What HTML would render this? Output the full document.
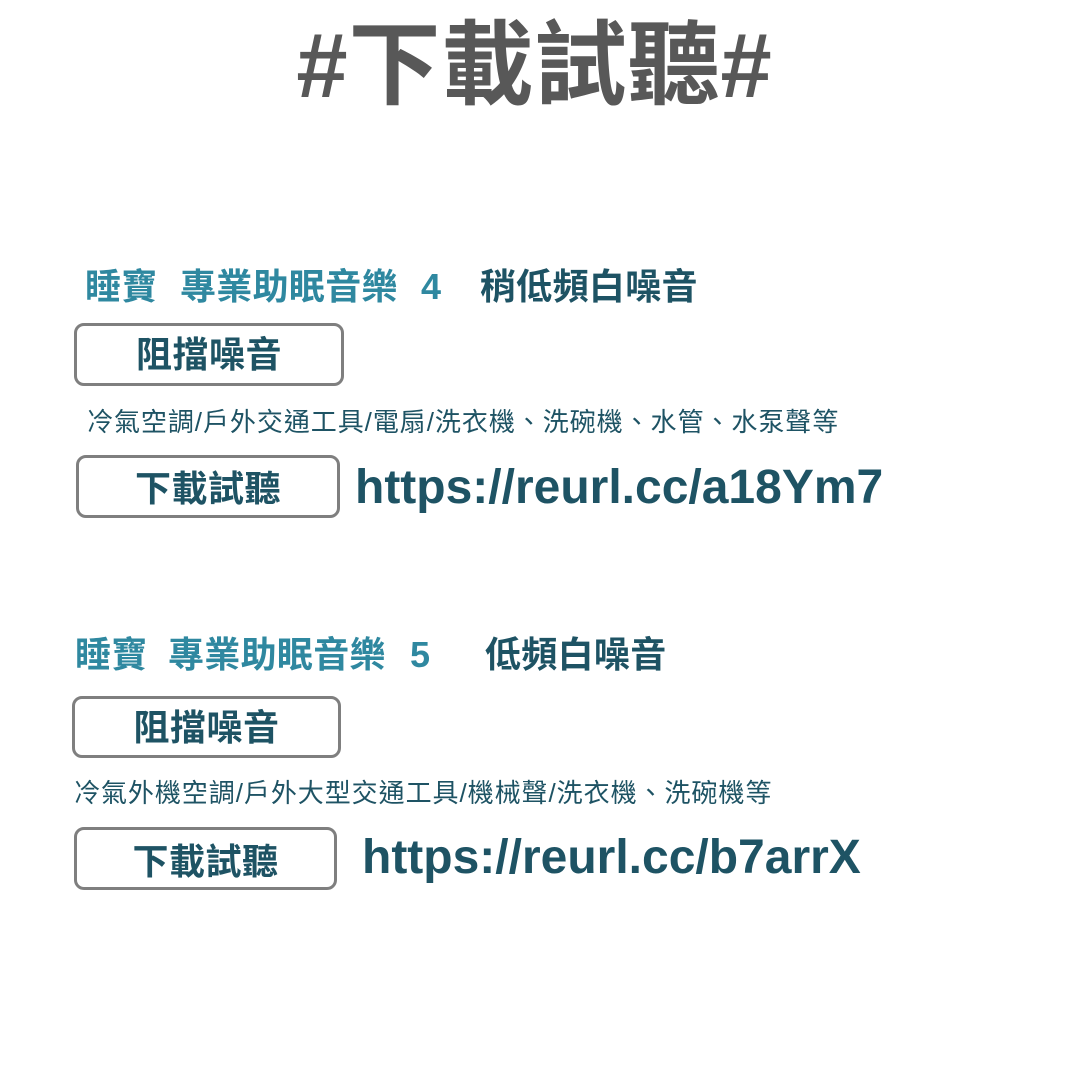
<!DOCTYPE html>
<html><head><meta charset="utf-8"><style>
body{margin:0;width:1069px;height:1069px;background:#fff;position:relative;overflow:hidden;font-family:"Liberation Sans","Noto Sans CJK TC",sans-serif;font-weight:bold}
.a{position:absolute;white-space:nowrap}
.t{left:0;width:1069px;text-align:center;top:16px;font-size:92px;color:#585858;line-height:100px;letter-spacing:1px}
.h{font-size:36px;line-height:40px;color:#2f88a0;letter-spacing:0.3px}
.d{color:#1e5364}
.box{position:absolute;border:3px solid #7f7f7f;border-radius:10px;box-sizing:border-box;text-align:center;color:#1e5364;font-size:36px;letter-spacing:0.5px}
.s{font-size:26px;font-weight:normal;color:#1e5364;line-height:28px;letter-spacing:0.95px}
.u{font-size:48px;color:#1e5364;line-height:50px}
</style></head><body>
<div class="a t">#下載試聽#</div>

<div class="a h" style="left:85px;top:267px">睡寶</div>
<div class="a h" style="left:180px;top:267px">專業助眠音樂</div>
<div class="a h" style="left:421px;top:267px">4</div>
<div class="a h d" style="left:480px;top:267px">稍低頻白噪音</div>
<div class="box" style="left:74px;top:323px;width:270px;height:63px;line-height:57px">阻擋噪音</div>
<div class="a s" style="left:87px;top:408px">冷氣空調/戶外交通工具/電扇/洗衣機、洗碗機、水管、水泵聲等</div>
<div class="box" style="left:76px;top:455px;width:264px;height:63px;line-height:61px">下載試聽</div>
<div class="a u" style="left:355px;top:463px">https://reurl.cc/a18Ym7</div>

<div class="a h" style="left:75px;top:635px">睡寶</div>
<div class="a h" style="left:168px;top:635px">專業助眠音樂</div>
<div class="a h" style="left:410px;top:635px">5</div>
<div class="a h d" style="left:485px;top:635px">低頻白噪音</div>
<div class="box" style="left:72px;top:696px;width:269px;height:62px;line-height:58px">阻擋噪音</div>
<div class="a s" style="left:74px;top:779px">冷氣外機空調/戶外大型交通工具/機械聲/洗衣機、洗碗機等</div>
<div class="box" style="left:74px;top:827px;width:263px;height:63px;line-height:63px">下載試聽</div>
<div class="a u" style="left:362px;top:833px">https://reurl.cc/b7arrX</div>
</body></html>
